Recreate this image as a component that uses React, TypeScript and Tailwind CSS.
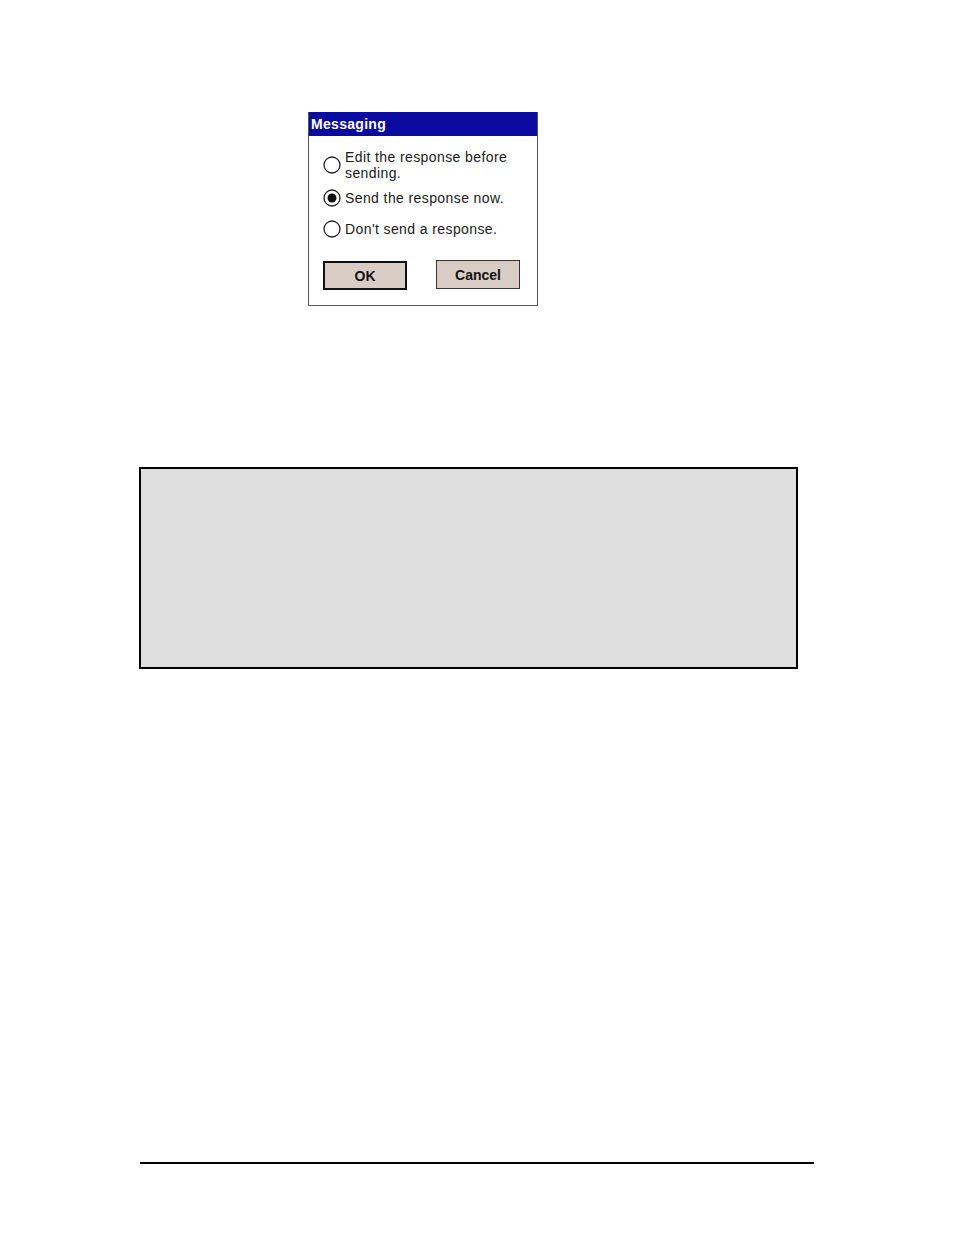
import React from "react";

function Radio({ checked }: { checked?: boolean }) {
  return (
    <svg width="18" height="18" viewBox="0 0 18 18" className="shrink-0">
      <circle cx="9" cy="9" r="8" fill="white" stroke="#222" strokeWidth="1.3" />
      {checked && <circle cx="9" cy="9" r="4.5" fill="#111" />}
    </svg>
  );
}

export default function App() {
  return (
    <div className="relative w-[954px] h-[1235px] bg-white overflow-hidden" style={{ fontFamily: '"Liberation Sans", Arial, sans-serif' }}>
      <div className="pt-[112px] pl-[308px]">
        <div className="w-[230px] h-[194px] border border-t-0 border-[#555] bg-white flex flex-col">
          <div className="h-[24px] bg-[#0a0aa0] flex items-center pl-[2px] text-white font-bold text-[14px] tracking-[0.3px]">
            Messaging
          </div>
          <div className="flex flex-col pl-[14px] pt-[13px] text-[14px] text-[#1a1a1a] leading-[16px] tracking-[0.4px]">
            <div className="flex items-center gap-[4px]">
              <Radio />
              <div>
                <div>Edit the response before</div>
                <div>sending.</div>
              </div>
            </div>
            <div className="flex items-center gap-[4px] mt-[8px]">
              <Radio checked />
              <div>Send the response now.</div>
            </div>
            <div className="flex items-center gap-[4px] mt-[13px]">
              <Radio />
              <div>Don't send a response.</div>
            </div>
            <div className="flex mt-[23px] gap-[29px] tracking-normal">
              <div className="w-[84px] h-[29px] border-2 border-[#111] bg-[#d9ccc5] flex items-center justify-center font-bold text-[14px] text-[#111]">
                OK
              </div>
              <div className="w-[84px] h-[29px] -mt-[1px] border border-[#333] bg-[#d9ccc5] flex items-center justify-center font-bold text-[14px] text-[#111]">
                Cancel
              </div>
            </div>
          </div>
        </div>
      </div>
      <div className="mt-[161px] ml-[139px] w-[659px] h-[202px] border-2 border-black bg-[#dfdfdf]" />
      <div className="mt-[493px] ml-[140px] w-[674px] h-[2px] bg-black" />
    </div>
  );
}
